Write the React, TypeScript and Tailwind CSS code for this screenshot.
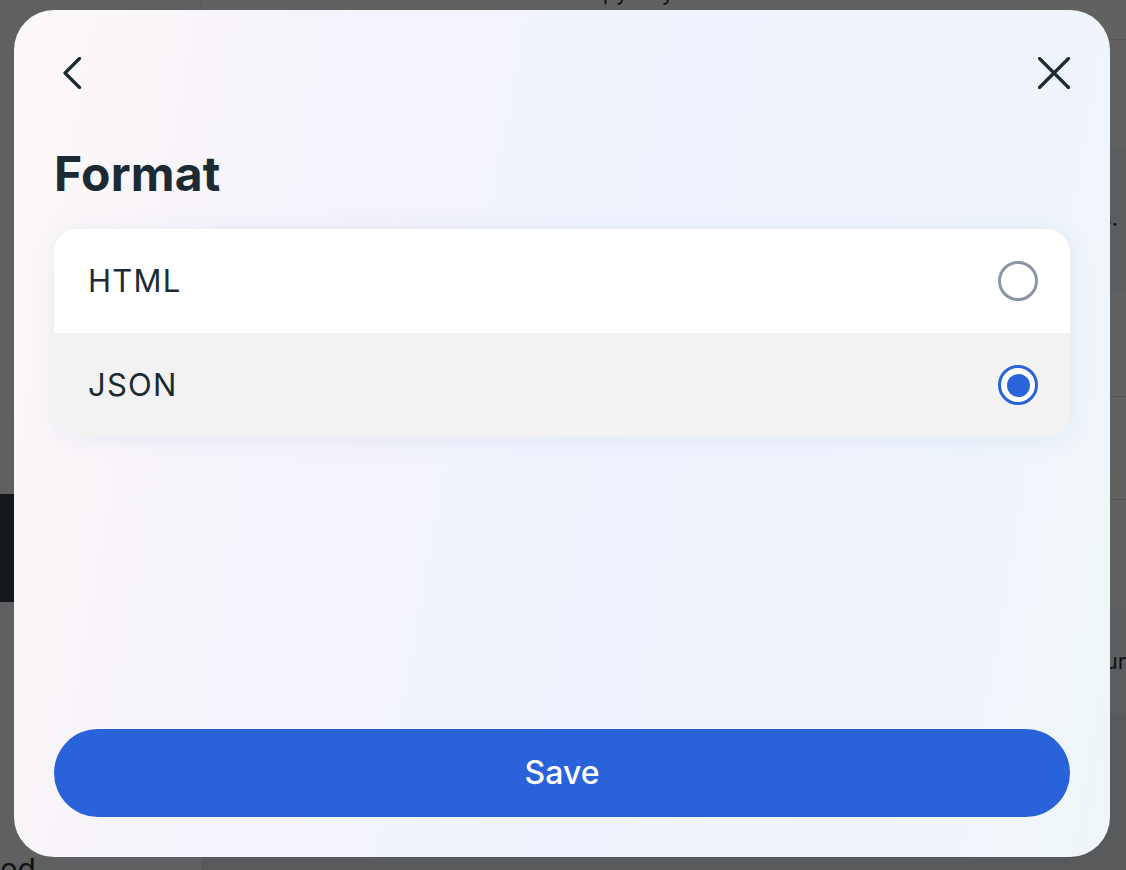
import { useState } from "react";

const options = ["HTML", "JSON"];

function BackIcon() {
  return (
    <svg width="32" height="32" viewBox="0 0 32 32" fill="none">
      <path d="M25.5 1.5 11 16l14.5 14.5" stroke="#1c2b33" strokeWidth="3.2" strokeLinecap="round" strokeLinejoin="round" />
    </svg>
  );
}

function CloseIcon() {
  return (
    <svg width="32" height="32" viewBox="0 0 32 32" fill="none">
      <path d="M1.5 1.5l29 29M30.5 1.5l-29 29" stroke="#1c2b33" strokeWidth="3.2" strokeLinecap="round" />
    </svg>
  );
}

function Radio({ checked }: { checked: boolean }) {
  if (checked) {
    return (
      <span className="flex h-10 w-10 items-center justify-center rounded-full border-[3.5px] border-[#2a64d8] bg-white">
        <span className="h-[23px] w-[23px] rounded-full bg-[#2a64d8]" />
      </span>
    );
  }
  return <span className="h-10 w-10 rounded-full border-[3px] border-[#8a96a3] bg-white" />;
}

function Backdrop() {
  return (
    <div className="flex h-full w-full bg-[#616161] font-['Inter',sans-serif]">
      <div className="flex w-[202px] flex-col border-r border-[#585858] bg-[#5f6062]">
        <div className="h-[494px]" />
        <div className="h-[108px] bg-[#15191c]" />
        <div className="flex-1" />
        <div className="-mb-[14px] text-[30px] leading-none text-[#111]">ed</div>
      </div>
      <div className="flex flex-1 flex-col">
        <div className="h-[40px] overflow-hidden border-b border-[#555] text-center">
          <div className="-mt-[20px] text-[22px] leading-[24px] text-[#111]">Make a copy of your information</div>
        </div>
        <div className="h-[107px]" />
        <div className="flex h-[143px] items-center justify-end bg-[#5c5d5f] pr-2 text-[22px] text-[#111]">s.</div>
        <div className="h-[107px] border-b border-[#555]" />
        <div className="h-[103px] border-b border-[#555]" />
        <div className="h-[108px]" />
        <div className="flex h-[107px] items-center justify-end bg-[#5c5d5f] text-[22px] text-[#111]">ur</div>
        <div className="flex-1 bg-[#58595b]" />
      </div>
    </div>
  );
}

export default function App() {
  const [selected, setSelected] = useState("JSON");

  return (
    <div className="relative h-[870px] w-full overflow-hidden">
      <Backdrop />

      <div className="absolute left-[14px] top-[10px] flex h-[847px] w-[1096px] flex-col overflow-hidden rounded-[40px] bg-[linear-gradient(100deg,#fdf9f8_0%,#f6f3fa_20%,#eff3fd_55%,#eff4fc_80%,#eff6f7_100%)] px-10 pb-10 pt-[47px] font-['Inter',sans-serif] text-[#1c2b33]">
        <div className="flex items-center justify-between">
          <button className="flex h-8 w-8 items-center justify-center">
            <BackIcon />
          </button>
          <button className="flex h-8 w-8 items-center justify-center">
            <CloseIcon />
          </button>
        </div>

        <h1 className="mt-[61px] text-[48px] font-bold leading-none tracking-[0.2px]">Format</h1>

        <div className="mt-[31px] overflow-hidden rounded-[24px] bg-white shadow-[0_2px_24px_rgba(60,90,160,0.08)]">
          {options.map((opt) => (
            <button
              key={opt}
              onClick={() => setSelected(opt)}
              className={
                "flex h-[104px] w-full items-center justify-between pl-[34px] pr-[32px] text-left " +
                (opt === selected ? "bg-[#f2f2f2]" : "bg-white")
              }
            >
              <span className="text-[31px] font-normal tracking-[1.2px]">{opt}</span>
              <Radio checked={opt === selected} />
            </button>
          ))}
        </div>

        <div className="flex-1" />

        <button className="flex h-[88px] w-full items-center justify-center rounded-full bg-[#2a63d9] text-[32px] font-medium text-white">
          Save
        </button>
      </div>
    </div>
  );
}
